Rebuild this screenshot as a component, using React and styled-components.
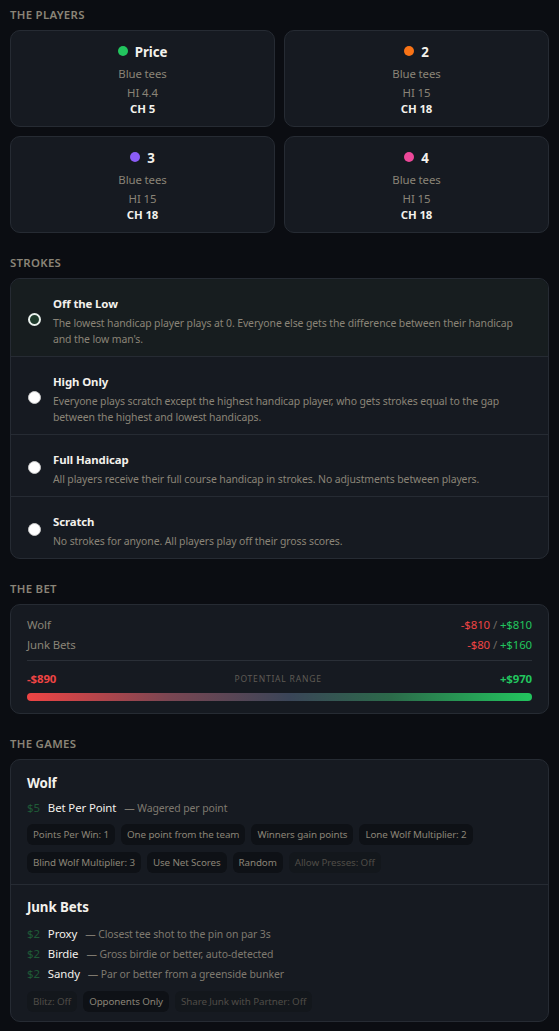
import React from "react";
import styled, { createGlobalStyle } from "styled-components";

const Global = createGlobalStyle`
  html, body {
    margin: 0;
    padding: 0;
    background: #0b0d12;
  }
  body {
    font-family: "Noto Sans", "Open Sans", sans-serif;
    letter-spacing: -0.1px;
    color: #e8e6e1;
  }
`;

const Page = styled.div`
  padding: 6px 10px 10px;
`;

const SectionLabel = styled.div`
  font-size: 11.4px;
  line-height: 17px;
  font-weight: 600;
  letter-spacing: 0.3px;
  text-transform: uppercase;
  color: #8a8477;
  margin: 0 0 7px;
`;

const Section = styled.section`
  margin-bottom: 21px;
`;

const Card = styled.div`
  background: #161a21;
  border: 1px solid #262b33;
  border-radius: 10px;
  overflow: hidden;
`;

const PlayerGrid = styled.div`
  display: grid;
  grid-template-columns: 1fr 1fr;
  gap: 9px;
`;

const PlayerCard = styled(Card)`
  display: flex;
  flex-direction: column;
  align-items: center;
  padding-top: 11px;
  box-sizing: border-box;
  height: 97px;
`;

const PlayerName = styled.div`
  display: flex;
  align-items: center;
  gap: 7px;
  font-size: 13.3px;
  font-weight: 700;
  color: #f3f1ec;
  line-height: 20px;
`;

const Dot = styled.span`
  width: 10px;
  height: 10px;
  border-radius: 50%;
  background: ${(p) => p.color};
  margin-top: -2px;
`;

const Tees = styled.div`
  font-size: 11.4px;
  color: #8a8477;
  margin-top: 3px;
  line-height: 18px;
`;

const Hi = styled.div`
  font-size: 11.4px;
  color: #8a8477;
  margin-top: 1px;
  line-height: 17px;
`;

const Ch = styled.div`
  font-size: 11.4px;
  font-weight: 700;
  color: #f3f1ec;
  line-height: 16px;
`;

const Option = styled.div`
  display: flex;
  align-items: center;
  gap: 12px;
  padding: 16px 16px 9px;
  min-height: ${(p) => p.h}px;
  box-sizing: border-box;
  background: ${(p) => (p.active ? "#171d1f" : "transparent")};
  & + & {
    border-top: 1px solid #262b33;
  }
`;

const Radio = styled.span`
  flex: none;
  width: 13px;
  height: 13px;
  border-radius: 50%;
  box-sizing: border-box;
  margin-left: 1px;
  background: ${(p) => (p.checked ? "#1f3b2c" : "#ffffff")};
  border: ${(p) => (p.checked ? "2px solid #e9f0ec" : "1px solid #c9c9c9")};
  margin-top: -4px;
`;

const OptText = styled.div`
  display: flex;
  flex-direction: column;
`;

const OptTitle = styled.div`
  font-size: 11.4px;
  font-weight: 700;
  color: #f3f1ec;
  line-height: 18px;
`;

const OptDesc = styled.div`
  font-size: 10.45px;
  color: #8a8477;
  line-height: 16px;
  margin-top: 2px;
`;

const BetCard = styled(Card)`
  padding: 10px 16px 12px;
`;

const BetRow = styled.div`
  display: flex;
  justify-content: space-between;
  font-size: 11.4px;
  line-height: 20px;
  color: #8a8477;
`;

const Neg = styled.span`
  color: #ef4444;
  font-weight: ${(p) => (p.bold ? 700 : 400)};
`;

const Pos = styled.span`
  color: #22c55e;
  font-weight: ${(p) => (p.bold ? 700 : 400)};
`;

const Slash = styled.span`
  color: #6f6a61;
`;

const Divider = styled.div`
  height: 1px;
  background: #2a2f37;
  margin: 5px 0 10px;
`;

const RangeRow = styled.div`
  display: flex;
  justify-content: space-between;
  align-items: center;
  font-size: 11.4px;
  line-height: 16px;
`;

const RangeLabel = styled.span`
  font-size: 8.5px;
  letter-spacing: 0.8px;
  color: #5f5b55;
  text-transform: uppercase;
`;

const Bar = styled.div`
  height: 8px;
  border-radius: 4px;
  margin-top: 6px;
  background: linear-gradient(90deg, #ef4444 0%, #7a4652 28%, #3a4558 52%, #2c6a4a 72%, #22c55e 100%);
`;

const Game = styled.div`
  padding: 13px 16px 11px;
  & + & {
    border-top: 1px solid #262b33;
    padding: 12px 16px 9px;
  }
`;

const GameTitle = styled.div`
  font-size: 13.3px;
  font-weight: 700;
  color: #f3f1ec;
  line-height: 20px;
  margin-bottom: ${(p) => p.gap}px;
`;

const Line = styled.div`
  display: flex;
  align-items: baseline;
  gap: 8px;
  line-height: 20px;
`;

const Amount = styled.span`
  font-size: 11.4px;
  color: #1f5a37;
`;

const LineName = styled.span`
  font-size: 11.4px;
  color: #f3f1ec;
`;

const LineDesc = styled.span`
  font-size: 10.45px;
  color: #7e796f;
`;

const Chips = styled.div`
  display: flex;
  flex-wrap: wrap;
  gap: 7px 6px;
  margin-top: ${(p) => p.top}px;
`;

const Chip = styled.span`
  font-size: 9.8px;
  line-height: 21px;
  height: 21px;
  padding: 0 6px;
  border-radius: 6px;
  background: ${(p) => (p.off ? "#13171c" : "#0e1116")};
  color: ${(p) => (p.off ? "#4f4c47" : "#8a8477")};
`;

const players = [
  { name: "Price", color: "#22c55e", hi: "4.4", ch: 5 },
  { name: "2", color: "#f97316", hi: "15", ch: 18 },
  { name: "3", color: "#8b5cf6", hi: "15", ch: 18 },
  { name: "4", color: "#ec4899", hi: "15", ch: 18 },
];

const strokes = [
  {
    title: "Off the Low",
    desc: "The lowest handicap player plays at 0. Everyone else gets the difference between their handicap and the low man's.",
    h: 76,
    checked: true,
  },
  {
    title: "High Only",
    desc: "Everyone plays scratch except the highest handicap player, who gets strokes equal to the gap between the highest and lowest handicaps.",
    h: 77,
  },
  {
    title: "Full Handicap",
    desc: "All players receive their full course handicap in strokes. No adjustments between players.",
    h: 62,
  },
  {
    title: "Scratch",
    desc: "No strokes for anyone. All players play off their gross scores.",
    h: 60,
  },
];

const junk = [
  { name: "Proxy", desc: "Closest tee shot to the pin on par 3s" },
  { name: "Birdie", desc: "Gross birdie or better, auto-detected" },
  { name: "Sandy", desc: "Par or better from a greenside bunker" },
];

export default function App() {
  return (
    <Page>
      <Global />
      <Section>
        <SectionLabel>The Players</SectionLabel>
        <PlayerGrid>
          {players.map((p) => (
            <PlayerCard key={p.name}>
              <PlayerName>
                <Dot color={p.color} />
                {p.name}
              </PlayerName>
              <Tees>Blue tees</Tees>
              <Hi>HI {p.hi}</Hi>
              <Ch>CH {p.ch}</Ch>
            </PlayerCard>
          ))}
        </PlayerGrid>
      </Section>

      <Section>
        <SectionLabel>Strokes</SectionLabel>
        <Card>
          {strokes.map((s) => (
            <Option key={s.title} h={s.h} active={s.checked}>
              <Radio checked={s.checked} />
              <OptText>
                <OptTitle>{s.title}</OptTitle>
                <OptDesc>{s.desc}</OptDesc>
              </OptText>
            </Option>
          ))}
        </Card>
      </Section>

      <Section>
        <SectionLabel>The Bet</SectionLabel>
        <BetCard>
          <BetRow>
            <span>Wolf</span>
            <span>
              <Neg>-$810</Neg> <Slash>/</Slash> <Pos>+$810</Pos>
            </span>
          </BetRow>
          <BetRow>
            <span>Junk Bets</span>
            <span>
              <Neg>-$80</Neg> <Slash>/</Slash> <Pos>+$160</Pos>
            </span>
          </BetRow>
          <Divider />
          <RangeRow>
            <Neg bold>-$890</Neg>
            <RangeLabel>Potential Range</RangeLabel>
            <Pos bold>+$970</Pos>
          </RangeRow>
          <Bar />
        </BetCard>
      </Section>

      <Section>
        <SectionLabel>The Games</SectionLabel>
        <Card>
          <Game>
            <GameTitle gap={5}>Wolf</GameTitle>
            <Line>
              <Amount>$5</Amount>
              <LineName>Bet Per Point</LineName>
              <LineDesc>— Wagered per point</LineDesc>
            </Line>
            <Chips top={6}>
              <Chip>Points Per Win: 1</Chip>
              <Chip>One point from the team</Chip>
              <Chip>Winners gain points</Chip>
              <Chip>Lone Wolf Multiplier: 2</Chip>
              <Chip>Blind Wolf Multiplier: 3</Chip>
              <Chip>Use Net Scores</Chip>
              <Chip>Random</Chip>
              <Chip off>Allow Presses: Off</Chip>
            </Chips>
          </Game>
          <Game>
            <GameTitle gap={7}>Junk Bets</GameTitle>
            {junk.map((j) => (
              <Line key={j.name}>
                <Amount>$2</Amount>
                <LineName>{j.name}</LineName>
                <LineDesc>— {j.desc}</LineDesc>
              </Line>
            ))}
            <Chips top={7}>
              <Chip off>Blitz: Off</Chip>
              <Chip>Opponents Only</Chip>
              <Chip off>Share Junk with Partner: Off</Chip>
            </Chips>
          </Game>
        </Card>
      </Section>
    </Page>
  );
}
